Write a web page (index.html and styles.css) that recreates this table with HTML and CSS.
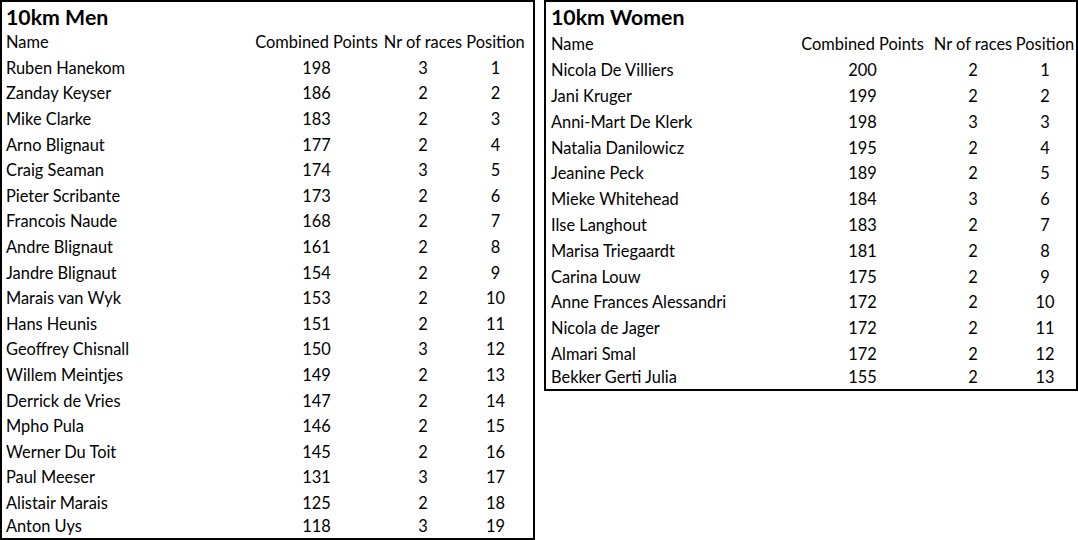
FILE: index.html
```html
<!DOCTYPE html>
<html>
<head>
<meta charset="utf-8">
<link rel="stylesheet" href="styles.css">
</head>
<body>
<div class="sheet">
  <section class="panel panel-men">
    <div class="title">10km Men</div>
    <div class="grid grid-men">
      <div class="name">Name</div><div>Combined Points</div><div>Nr of races</div><div>Position</div>
      <div class="name">Ruben Hanekom</div><div>198</div><div>3</div><div>1</div>
      <div class="name">Zanday Keyser</div><div>186</div><div>2</div><div>2</div>
      <div class="name">Mike Clarke</div><div>183</div><div>2</div><div>3</div>
      <div class="name">Arno Blignaut</div><div>177</div><div>2</div><div>4</div>
      <div class="name">Craig Seaman</div><div>174</div><div>3</div><div>5</div>
      <div class="name">Pieter Scribante</div><div>173</div><div>2</div><div>6</div>
      <div class="name">Francois Naude</div><div>168</div><div>2</div><div>7</div>
      <div class="name">Andre Blignaut</div><div>161</div><div>2</div><div>8</div>
      <div class="name">Jandre Blignaut</div><div>154</div><div>2</div><div>9</div>
      <div class="name">Marais van Wyk</div><div>153</div><div>2</div><div>10</div>
      <div class="name">Hans Heunis</div><div>151</div><div>2</div><div>11</div>
      <div class="name">Geoffrey Chisnall</div><div>150</div><div>3</div><div>12</div>
      <div class="name">Willem Meintjes</div><div>149</div><div>2</div><div>13</div>
      <div class="name">Derrick de Vries</div><div>147</div><div>2</div><div>14</div>
      <div class="name">Mpho Pula</div><div>146</div><div>2</div><div>15</div>
      <div class="name">Werner Du Toit</div><div>145</div><div>2</div><div>16</div>
      <div class="name">Paul Meeser</div><div>131</div><div>3</div><div>17</div>
      <div class="name">Alistair Marais</div><div>125</div><div>2</div><div>18</div>
      <div class="name">Anton Uys</div><div>118</div><div>3</div><div>19</div>
    </div>
  </section>
  <section class="panel panel-women">
    <div class="title title-women">10km Women</div>
    <div class="grid grid-women">
      <div class="name">Name</div><div>Combined Points</div><div>Nr of races</div><div>Position</div>
      <div class="name">Nicola De Villiers</div><div>200</div><div>2</div><div>1</div>
      <div class="name">Jani Kruger</div><div>199</div><div>2</div><div>2</div>
      <div class="name">Anni-Mart De Klerk</div><div>198</div><div>3</div><div>3</div>
      <div class="name">Natalia Danilowicz</div><div>195</div><div>2</div><div>4</div>
      <div class="name">Jeanine Peck</div><div>189</div><div>2</div><div>5</div>
      <div class="name">Mieke Whitehead</div><div>184</div><div>3</div><div>6</div>
      <div class="name">Ilse Langhout</div><div>183</div><div>2</div><div>7</div>
      <div class="name">Marisa Triegaardt</div><div>181</div><div>2</div><div>8</div>
      <div class="name">Carina Louw</div><div>175</div><div>2</div><div>9</div>
      <div class="name">Anne Frances Alessandri</div><div>172</div><div>2</div><div>10</div>
      <div class="name">Nicola de Jager</div><div>172</div><div>2</div><div>11</div>
      <div class="name">Almari Smal</div><div>172</div><div>2</div><div>12</div>
      <div class="name">Bekker Gerti Julia</div><div>155</div><div>2</div><div>13</div>
    </div>
  </section>
</div>
</body>
</html>
```

FILE: styles.css
```css
html, body {
  margin: 0;
  padding: 0;
  background: #ffffff;
}

body {
  font-family: Lato, "Liberation Sans", sans-serif;
  color: #000000;
  font-size: 16.4px;
}

.sheet {
  display: flex;
  align-items: flex-start;
  gap: 9px;
  width: 1078px;
  height: 540px;
  overflow: hidden;
}

.panel {
  box-sizing: border-box;
  border: 2px solid #000000;
  overflow: hidden;
}

.panel-men {
  width: 535px;
  height: 540px;
  padding-left: 4px;
}

.panel-women {
  width: 534px;
  padding-left: 5px;
  padding-bottom: 2px;
}

.title {
  font-weight: bold;
  font-size: 21.3px;
  height: 27px;
  line-height: 30px;
}

.title-women {
  height: 29px;
}

.grid {
  display: grid;
  align-items: center;
  justify-items: center;
  white-space: nowrap;
}

.grid-men {
  grid-template-columns: 249px 123px 90px 55px;
  grid-template-rows: repeat(19, 25.6px) 19.6px;
}

.grid-women {
  grid-template-columns: 251px 121px 100px 44px;
  grid-template-rows: repeat(13, 25.8px) 20.8px;
}

.grid .name {
  justify-self: start;
}
```
